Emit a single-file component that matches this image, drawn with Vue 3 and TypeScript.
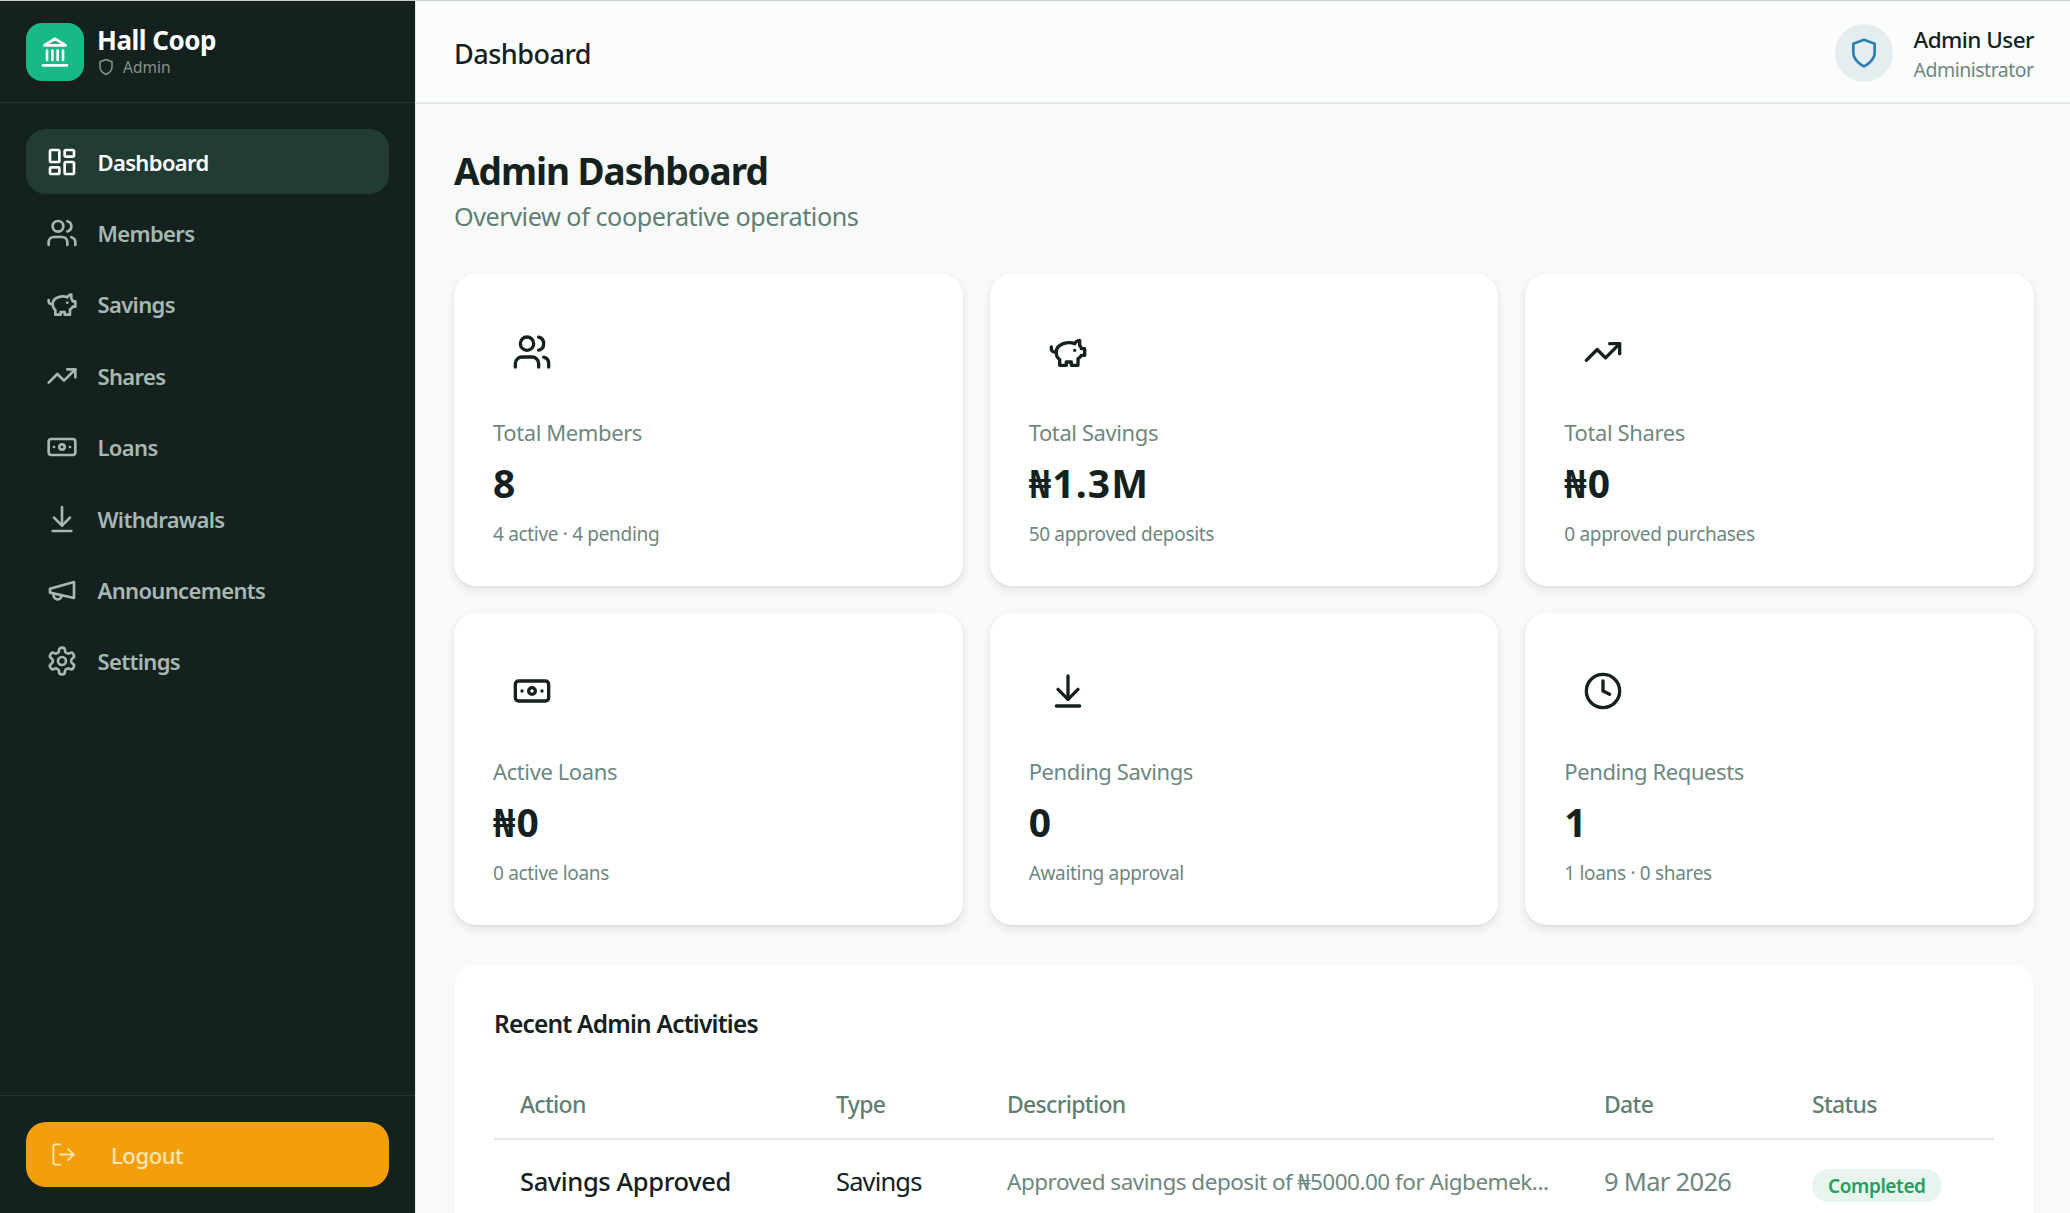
<script setup lang="ts">
const navItems = [
  { label: "Dashboard", icon: "dashboard", active: true },
  { label: "Members", icon: "users" },
  { label: "Savings", icon: "piggy" },
  { label: "Shares", icon: "trend" },
  { label: "Loans", icon: "banknote" },
  { label: "Withdrawals", icon: "download" },
  { label: "Announcements", icon: "megaphone" },
  { label: "Settings", icon: "settings" },
];

const stats = [
  { label: "Total Members", value: "8", sub: "4 active · 4 pending", icon: "users" },
  { label: "Total Savings", value: "₦1.3M", sub: "50 approved deposits", icon: "piggy" },
  { label: "Total Shares", value: "₦0", sub: "0 approved purchases", icon: "trend" },
  { label: "Active Loans", value: "₦0", sub: "0 active loans", icon: "banknote" },
  { label: "Pending Savings", value: "0", sub: "Awaiting approval", icon: "download" },
  { label: "Pending Requests", value: "1", sub: "1 loans · 0 shares", icon: "clock" },
];

const icons: Record<string, string> = {
  dashboard:
    '<rect x="3" y="3" width="7" height="9" rx="1"/><rect x="14" y="3" width="7" height="5" rx="1"/><rect x="14" y="12" width="7" height="9" rx="1"/><rect x="3" y="16" width="7" height="5" rx="1"/>',
  users:
    '<path d="M16 21v-2a4 4 0 0 0-4-4H6a4 4 0 0 0-4 4v2"/><circle cx="9" cy="7" r="4"/><path d="M22 21v-2a4 4 0 0 0-3-3.87"/><path d="M16 3.13a4 4 0 0 1 0 7.75"/>',
  piggy:
    '<path d="M19 5c-1.5 0-2.8 1.4-3 2-3.5-1.5-11-.3-11 5 0 1.8 0 3 2 4.5V20h4v-2h3v2h4v-4c1-.5 1.7-1 2-2h2v-4h-2c0-1-.5-1.5-1-2V5z"/><path d="M2 9v1c0 1.1.9 2 2 2h1"/><path d="M16 11h.01"/>',
  trend: '<polyline points="22 7 13.5 15.5 8.5 10.5 2 17"/><polyline points="16 7 22 7 22 13"/>',
  banknote: '<rect x="2" y="6" width="20" height="12" rx="2"/><circle cx="12" cy="12" r="2"/><path d="M6 12h.01M18 12h.01"/>',
  download: '<path d="M12 17V3"/><path d="m6 11 6 6 6-6"/><path d="M19 21H5"/>',
  megaphone: '<path d="m3 11 18-5v12L3 14v-3z"/><path d="M11.6 16.8a3 3 0 1 1-5.8-1.6"/>',
  settings:
    '<path d="M12.22 2h-.44a2 2 0 0 0-2 2v.18a2 2 0 0 1-1 1.73l-.43.25a2 2 0 0 1-2 0l-.15-.08a2 2 0 0 0-2.73.73l-.22.38a2 2 0 0 0 .73 2.73l.15.1a2 2 0 0 1 1 1.72v.51a2 2 0 0 1-1 1.74l-.15.09a2 2 0 0 0-.73 2.73l.22.38a2 2 0 0 0 2.73.73l.15-.08a2 2 0 0 1 2 0l.43.25a2 2 0 0 1 1 1.73V20a2 2 0 0 0 2 2h.44a2 2 0 0 0 2-2v-.18a2 2 0 0 1 1-1.73l.43-.25a2 2 0 0 1 2 0l.15.08a2 2 0 0 0 2.73-.73l.22-.39a2 2 0 0 0-.73-2.73l-.15-.08a2 2 0 0 1-1-1.74v-.5a2 2 0 0 1 1-1.74l.15-.09a2 2 0 0 0 .73-2.73l-.22-.38a2 2 0 0 0-2.73-.73l-.15.08a2 2 0 0 1-2 0l-.43-.25a2 2 0 0 1-1-1.73V4a2 2 0 0 0-2-2z"/><circle cx="12" cy="12" r="3"/>',
  clock: '<circle cx="12" cy="12" r="10"/><polyline points="12 6 12 12 16 14"/>',
};

const activities = [
  {
    action: "Savings Approved",
    type: "Savings",
    description: "Approved savings deposit of ₦5000.00 for Aigbemek...",
    date: "9 Mar 2026",
    status: "Completed",
  },
];
</script>

<template>
  <div class="shell">
    <aside class="sidebar">
      <div class="brand">
        <div class="brand-logo">
          <svg class="logo-icon" viewBox="0 0 24 24">
            <path d="M3 22h18M6 18v-7M10 18v-7M14 18v-7M18 18v-7" />
            <polygon points="12 2 20 7 4 7" />
          </svg>
        </div>
        <div class="brand-text">
          <div class="brand-name">Hall Coop</div>
          <div class="brand-role">
            <svg class="role-icon" viewBox="0 0 24 24">
              <path d="M12 22s8-4 8-10V5l-8-3-8 3v7c0 6 8 10 8 10z" />
            </svg>
            <span>Admin</span>
          </div>
        </div>
      </div>

      <nav class="nav">
        <a v-for="item in navItems" :key="item.label" class="nav-item" :class="{ active: item.active }">
          <svg class="nav-icon" viewBox="0 0 24 24" v-html="icons[item.icon]"></svg>
          <span>{{ item.label }}</span>
        </a>
      </nav>

      <div class="sidebar-foot">
        <button class="logout">
          <svg class="logout-icon" viewBox="0 0 24 24">
            <path d="M9 21H5a2 2 0 0 1-2-2V5a2 2 0 0 1 2-2h4" />
            <polyline points="16 17 21 12 16 7" />
            <line x1="21" y1="12" x2="9" y2="12" />
          </svg>
          <span>Logout</span>
        </button>
      </div>
    </aside>

    <div class="main">
      <header class="topbar">
        <div class="topbar-title">Dashboard</div>
        <div class="user">
          <div class="user-avatar">
            <svg class="user-icon" viewBox="0 0 24 24">
              <path d="M12 22s8-4 8-10V5l-8-3-8 3v7c0 6 8 10 8 10z" />
            </svg>
          </div>
          <div class="user-text">
            <div class="user-name">Admin User</div>
            <div class="user-role">Administrator</div>
          </div>
        </div>
      </header>

      <main class="content">
        <h1 class="page-title">Admin Dashboard</h1>
        <p class="page-sub">Overview of cooperative operations</p>

        <section class="stats">
          <div v-for="s in stats" :key="s.label" class="stat-card">
            <div class="stat-icon-box">
              <svg class="stat-icon" viewBox="0 0 24 24" v-html="icons[s.icon]"></svg>
            </div>
            <div class="stat-label">{{ s.label }}</div>
            <div class="stat-value">{{ s.value }}</div>
            <div class="stat-sub">{{ s.sub }}</div>
          </div>
        </section>

        <section class="panel">
          <h2 class="panel-title">Recent Admin Activities</h2>
          <table class="table">
            <colgroup>
              <col class="col-action" />
              <col class="col-type" />
              <col class="col-desc" />
              <col class="col-date" />
              <col class="col-status" />
            </colgroup>
            <thead>
              <tr>
                <th>Action</th>
                <th>Type</th>
                <th>Description</th>
                <th>Date</th>
                <th>Status</th>
              </tr>
            </thead>
            <tbody>
              <tr v-for="a in activities" :key="a.action">
                <td class="cell-action">{{ a.action }}</td>
                <td class="cell-type">{{ a.type }}</td>
                <td class="cell-desc">{{ a.description }}</td>
                <td class="cell-date">{{ a.date }}</td>
                <td class="cell-status"><span class="pill">{{ a.status }}</span></td>
              </tr>
            </tbody>
          </table>
        </section>
      </main>
    </div>
  </div>
</template>

<style>
html,
body {
  margin: 0;
  height: 100%;
  overflow: hidden;
}
</style>

<style scoped>
.shell {
  display: flex;
  height: 1213px;
  box-sizing: border-box;
  overflow: hidden;
  border-top: 1px solid #c9cfcd;
  font-family: "Noto Sans", "Open Sans", sans-serif;
  background: #f8faf9;
  color: #14211e;
}

svg {
  fill: none;
  stroke: currentColor;
  stroke-width: 2;
  stroke-linecap: round;
  stroke-linejoin: round;
  flex-shrink: 0;
  display: block;
}

/* sidebar */
.sidebar {
  width: 415px;
  flex-shrink: 0;
  display: flex;
  flex-direction: column;
  background: #14211e;
}

.brand {
  height: 102px;
  box-sizing: border-box;
  display: flex;
  align-items: center;
  gap: 13px;
  padding: 0 26px;
  border-bottom: 1px solid #24352f;
}

.brand-logo {
  width: 58px;
  height: 58px;
  border-radius: 16px;
  background: #17b987;
  color: #fff;
  display: flex;
  align-items: center;
  justify-content: center;
}

.logo-icon {
  width: 32px;
  height: 32px;
}

.brand-text {
  margin-bottom: 3px;
}

.brand-name {
  font-size: 26px;
  line-height: 34px;
  font-weight: 700;
  color: #fff;
  letter-spacing: -0.5px;
}

.brand-role {
  display: flex;
  align-items: center;
  gap: 8px;
  font-size: 15.5px;
  line-height: 20px;
  color: #84958f;
}

.role-icon {
  width: 18px;
  height: 18px;
}

.nav {
  flex: 1;
  display: flex;
  flex-direction: column;
  gap: 6px;
  padding: 26px 26px 0;
}

.nav-item {
  height: 65.4px;
  box-sizing: border-box;
  display: flex;
  align-items: center;
  gap: 19.5px;
  padding: 0 20px;
  border-radius: 20px;
  font-size: 22px;
  font-weight: 600;
  color: #a7b8b2;
  letter-spacing: -0.65px;
}

.nav-item.active {
  background: #213d33;
  color: #fff;
}

.nav-icon {
  width: 32px;
  height: 32px;
}

.sidebar-foot {
  border-top: 1px solid #24352f;
  padding: 26px 26px;
}

.logout {
  width: 100%;
  height: 65px;
  border: none;
  border-radius: 20px;
  background: #f39f0b;
  color: #fde6b3;
  display: flex;
  align-items: center;
  gap: 34px;
  padding: 0 24px;
  font: inherit;
  font-size: 22px;
  font-weight: 500;
  letter-spacing: -0.4px;
}

.logout-icon {
  width: 27px;
  height: 27px;
  stroke-width: 1.6;
}

/* main */
.main {
  flex: 1;
  min-width: 0;
  display: flex;
  flex-direction: column;
  border-left: 1px solid #e3e8e6;
}

.topbar {
  height: 103px;
  flex-shrink: 0;
  box-sizing: border-box;
  display: flex;
  align-items: center;
  justify-content: space-between;
  padding: 2px 36px 0 38px;
  background: #fbfdfc;
  border-bottom: 2px solid #e3e8e6;
}

.topbar-title {
  margin-top: 2px;
  font-size: 27px;
  font-weight: 500;
  letter-spacing: -0.5px;
}

.user {
  display: flex;
  align-items: center;
  gap: 20px;
}

.user-avatar {
  width: 58px;
  height: 58px;
  border-radius: 50%;
  background: #e6edf1;
  color: #2d7fa8;
  display: flex;
  align-items: center;
  justify-content: center;
}

.user-icon {
  width: 32px;
  height: 32px;
}

.user-text {
  margin-top: 4px;
}

.user-name {
  font-size: 22.5px;
  line-height: 30px;
  font-weight: 500;
  letter-spacing: -0.55px;
}

.user-role {
  font-size: 19.5px;
  line-height: 30px;
  color: #6e8780;
  letter-spacing: -0.5px;
}

.content {
  flex: 1;
  min-height: 0;
  padding: 42px 36px 0 38px;
}

.page-title {
  margin: 0;
  font-size: 37px;
  line-height: 50px;
  font-weight: 700;
  letter-spacing: -1.05px;
}

.page-sub {
  margin: 2px 0 40px;
  font-size: 25.2px;
  line-height: 36px;
  color: #5f7f74;
  letter-spacing: -0.45px;
}

.stats {
  display: grid;
  grid-template-columns: repeat(3, 1fr);
  gap: 27px;
}

.stat-card {
  height: 312px;
  box-sizing: border-box;
  padding: 40px 39px 0;
  background: #fff;
  border-radius: 22px;
  box-shadow: 0 4px 9px rgba(20, 33, 30, 0.1), 0 1px 2px rgba(20, 33, 30, 0.05);
}

.stat-icon-box {
  width: 78px;
  height: 75px;
  display: flex;
  align-items: center;
  justify-content: center;
}

.stat-icon {
  width: 40px;
  height: 40px;
}

.stat-label {
  margin-top: 28px;
  font-size: 22px;
  line-height: 30px;
  color: #6e8780;
  letter-spacing: -0.4px;
}

.stat-value {
  margin-top: 10px;
  font-size: 39px;
  line-height: 52px;
  font-weight: 700;
  letter-spacing: 1.2px;
}

.stat-sub {
  margin-top: 12px;
  font-size: 19px;
  line-height: 26px;
  color: #6e8780;
  letter-spacing: -0.32px;
}

.panel {
  margin-top: 40px;
  padding: 38px 40px 30px;
  background: #fff;
  border-radius: 22px;
  box-shadow: 0 1px 3px rgba(20, 33, 30, 0.05);
}

.panel-title {
  margin: 0 0 24px;
  font-size: 24.5px;
  line-height: 42px;
  font-weight: 600;
  letter-spacing: -0.8px;
}

.table {
  width: 100%;
  table-layout: fixed;
  border-collapse: collapse;
}

.col-action { width: 316px; }
.col-type { width: 171px; }
.col-desc { width: 597px; }
.col-date { width: 208px; }
.col-status { width: 208px; }

.table th {
  height: 69px;
  padding: 0 0 0 26px;
  text-align: left;
  font-size: 23px;
  font-weight: 500;
  color: #5f7f74;
  letter-spacing: -0.7px;
  border-bottom: 2px solid #e3e8e6;
}

.table td {
  height: 76px;
  padding: 0 0 0 26px;
  font-size: 25.5px;
  white-space: nowrap;
}

.table td.cell-action {
  font-weight: 500;
  letter-spacing: -0.4px;
}

.table td.cell-type {
  letter-spacing: -0.85px;
}

.table td.cell-desc {
  color: #6e8780;
  font-size: 22.5px;
  letter-spacing: -0.5px;
}

.table td.cell-date {
  color: #6e8780;
  letter-spacing: -0.7px;
}

.table td.cell-status {
  padding-top: 6px;
}

.pill {
  display: inline-flex;
  align-items: center;
  height: 33px;
  padding: 0 16px;
  border-radius: 17px;
  background: #e7f5ee;
  color: #22a05f;
  font-size: 19px;
  font-weight: 600;
  letter-spacing: -0.4px;
}
</style>
